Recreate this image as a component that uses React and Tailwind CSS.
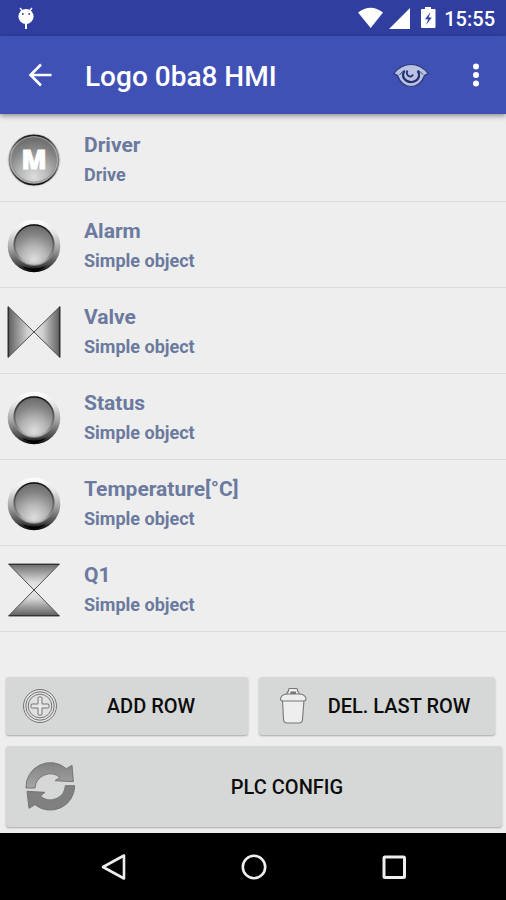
import { useState } from "react";

const initialRows = [
  { name: "Driver", type: "Drive", icon: "motor" },
  { name: "Alarm", type: "Simple object", icon: "lamp" },
  { name: "Valve", type: "Simple object", icon: "valveH" },
  { name: "Status", type: "Simple object", icon: "lamp" },
  { name: "Temperature[°C]", type: "Simple object", icon: "lamp" },
  { name: "Q1", type: "Simple object", icon: "valveV" }
];

// Gradients shared by all the row icons
function IconDefs() {
  return (
    <svg className="absolute h-0 w-0" aria-hidden="true">
      <defs>
        <radialGradient id="face" cx="0.5" cy="0.88" r="0.85">
          <stop offset="0" stopColor="#dedede" />
          <stop offset="0.4" stopColor="#b4b4b4" />
          <stop offset="0.75" stopColor="#848484" />
          <stop offset="1" stopColor="#6c6c6c" />
        </radialGradient>
        <linearGradient id="bezel" x1="0" y1="0" x2="0" y2="1">
          <stop offset="0" stopColor="#ffffff" />
          <stop offset="0.25" stopColor="#e4e4e4" />
          <stop offset="0.55" stopColor="#a4a4a4" />
          <stop offset="0.85" stopColor="#4a4a4a" />
          <stop offset="1" stopColor="#000000" />
        </linearGradient>
        <linearGradient id="innerRim" x1="0" y1="0" x2="0" y2="1">
          <stop offset="0" stopColor="#101010" />
          <stop offset="0.4" stopColor="#555555" />
          <stop offset="0.8" stopColor="#858585" />
          <stop offset="1" stopColor="#c8c8c8" />
        </linearGradient>
        <linearGradient id="motorRim" x1="0" y1="0" x2="0" y2="1">
          <stop offset="0" stopColor="#1c1c1c" />
          <stop offset="0.3" stopColor="#8a8a8a" />
          <stop offset="0.65" stopColor="#808080" />
          <stop offset="1" stopColor="#101010" />
        </linearGradient>
        <linearGradient id="valveX" x1="0" y1="0" x2="1" y2="0">
          <stop offset="0" stopColor="#5c5c5c" />
          <stop offset="0.38" stopColor="#d2d2d2" />
          <stop offset="0.5" stopColor="#dedede" />
          <stop offset="0.66" stopColor="#d2d2d2" />
          <stop offset="1" stopColor="#5c5c5c" />
        </linearGradient>
        <linearGradient id="valveY" x1="0" y1="0" x2="0" y2="1">
          <stop offset="0" stopColor="#6a6a6a" />
          <stop offset="0.36" stopColor="#e0e0e0" />
          <stop offset="0.5" stopColor="#e6e6e6" />
          <stop offset="0.66" stopColor="#d8d8d8" />
          <stop offset="1" stopColor="#5c5c5c" />
        </linearGradient>
        <linearGradient id="arrowTop" x1="0" y1="0" x2="0" y2="1">
          <stop offset="0" stopColor="#828282" />
          <stop offset="1" stopColor="#a6a6a6" />
        </linearGradient>
      </defs>
    </svg>
  );
}

function RowIcon({ kind }) {
  if (kind === "motor") {
    return (
      <svg viewBox="0 0 54 54" className="h-[54px] w-[54px] shrink-0" aria-hidden="true">
        <circle cx="27" cy="27" r="26.500" fill="#c8c8c8" opacity="0.6" />
        <circle cx="27" cy="27" r="24.600" fill="#b4b4b4" stroke="url(#motorRim)" strokeWidth="1.600" />
        <circle cx="27" cy="26.500" r="22.600" fill="url(#face)" stroke="#8a8a8a" strokeWidth="0.800" />
        <text x="27" y="35.500" textAnchor="middle" fontSize="26" fill="#ffffff" stroke="#ffffff" strokeWidth="0.800" className="font-['Open_Sans',sans-serif] font-extrabold">
          M
        </text>
      </svg>
    );
  }
  if (kind === "lamp") {
    return (
      <svg viewBox="0 0 54 54" className="h-[54px] w-[54px] shrink-0" aria-hidden="true">
        <circle cx="27" cy="27" r="26.300" fill="url(#bezel)" />
        <path d="M15 47Q27 52 39 47Q27 56.500 15 47Z" fill="#000000" />
        <circle cx="27" cy="26" r="20.800" fill="#8c8c8c" />
        <circle cx="27" cy="25.500" r="19.500" fill="url(#face)" stroke="url(#innerRim)" strokeWidth="1.600" />
      </svg>
    );
  }
  if (kind === "valveH") {
    return (
      <svg viewBox="0 0 54 54" className="h-[54px] w-[54px] shrink-0" aria-hidden="true">
        <path d="M1 1.500L53 52.500V1.500L1 52.500Z" fill="url(#valveX)" stroke="#4d4d4d" strokeWidth="1" />
        <path d="M1.500 2V52M52.500 2V52" stroke="#2e2e2e" strokeWidth="1.200" />
      </svg>
    );
  }
  return (
    <svg viewBox="0 0 54 54" className="h-[54px] w-[54px] shrink-0" aria-hidden="true">
      <path d="M1.500 1L52.500 53H1.500L52.500 1Z" fill="url(#valveY)" stroke="#4d4d4d" strokeWidth="1" />
      <path d="M2 1.500H52M2 52.500H52" stroke="#333333" strokeWidth="1.200" />
    </svg>
  );
}

function StatusBar() {
  return (
    <div className="flex h-9 items-center bg-[#303f9f] pl-[17px] pr-[11px] text-white">
      <svg viewBox="0 0 18 24" className="h-6 w-[18px]" fill="#ffffff" aria-hidden="true">
        <path d="M3 2L5.500 5M15 2L12.500 5" stroke="#ffffff" strokeWidth="1.400" />
        <circle cx="9" cy="10.500" r="7.600" />
        <path d="M9 17V23" stroke="#ffffff" strokeWidth="2" />
        <circle cx="5.800" cy="8" r="0.900" fill="#303f9f" />
        <circle cx="12.200" cy="8" r="0.900" fill="#303f9f" />
      </svg>
      <svg viewBox="0 0 78 24" className="ml-auto h-6 w-[78px]" fill="#ffffff" aria-hidden="true">
        <path d="M0 6.500Q12.500 -3 25 6.500L12.700 22Z" />
        <path d="M31 23L52 2V23Z" />
        <path d="M67 1H73V3H76.500Q77.500 3 77.500 4V21Q77.500 22 76.500 22H64Q63 22 63 21V4Q63 3 64 3H67Z" />
        <path d="M72.500 6L67 13.300H70.200L68 19L73.800 11.500H70.600Z" fill="#303f9f" />
      </svg>
      <time className="ml-2 pt-0.5 text-[20px] leading-6 font-medium">15:55</time>
    </div>
  );
}

function Toolbar() {
  return (
    <header className="relative flex h-[78px] items-center bg-[#3f51b5] pl-7 pr-5 text-white shadow-[0_2px_5px_rgba(0,0,0,0.4)]">
      <button type="button" aria-label="Back">
        <svg viewBox="0 0 24 24" className="h-6 w-6" fill="none" stroke="#ffffff" strokeWidth="2.600" aria-hidden="true">
          <path d="M23.500 12H3M13 1.500L2.500 12L13 22.500" />
        </svg>
      </button>
      <h1 className="ml-[33px] pt-1 text-[28px] leading-9 font-medium">Logo 0ba8 HMI</h1>
      <button type="button" aria-label="View" className="ml-auto">
        <svg viewBox="0 0 36 26" className="h-[26px] w-9" fill="none" aria-hidden="true">
          <path
            d="M0.800 11.500Q8 2.500 18 2.500Q28 2.500 35.200 11.500L31.500 13.500Q27.500 24.500 18 24.500Q8.500 24.500 4.500 13.500Z"
            fill="#b9c1e4"
            stroke="#2b3773"
            strokeWidth="1.200"
          />
          <path d="M6.500 13Q9 9.500 11.500 8.500Q9 14 11.500 17.500Q14 20.500 18.500 20.500Q24 20 26 16Q27.500 12 25 8.500Q28 10 30 12.500" stroke="#303d82" strokeWidth="1" />
          <path d="M11.500 9Q8.500 13.500 11.500 17Q14.500 20.500 19 20Q25 19 26 14Q26.500 11 24.500 9" stroke="#24306e" strokeWidth="2.200" />
          <path d="M14.500 8.500Q12.800 12 15.500 14Q19 15.500 20 12.500" stroke="#24306e" strokeWidth="1.800" />
        </svg>
      </button>
      <button type="button" aria-label="More options" className="ml-[37px]">
        <svg viewBox="0 0 20 24" className="h-6 w-5" fill="#ffffff" aria-hidden="true">
          <circle cx="10" cy="3.500" r="3" />
          <circle cx="10" cy="12" r="3" />
          <circle cx="10" cy="20.500" r="3" />
        </svg>
      </button>
    </header>
  );
}

const buttonClass =
  "flex items-center rounded-[3px] bg-[#d6d8d7] pr-1 text-[20px] leading-6 font-medium text-[#0c0c0c] shadow-[0_1px_2px_rgba(0,0,0,0.3)]";

export default function App() {
  const [rows, setRows] = useState(initialRows);

  const addRow = () =>
    setRows([...rows, { name: `Q${rows.length - 4}`, type: "Simple object", icon: "lamp" }]);

  return (
    <div className="flex min-h-screen flex-col bg-[#eeeeee] font-[Roboto,sans-serif]">
      <IconDefs />
      <StatusBar />
      <Toolbar />

      <main className="flex flex-1 flex-col pt-0.5">
        <ul>
          {rows.map((row, i) => (
            <li key={i} className="flex border-b border-[#dcdcdc] pt-3.5 pr-4 pb-[11px] pl-[7px]">
              <div className="pt-[3px]">
                <RowIcon kind={row.icon} />
              </div>
              <div className="ml-[23px] text-[#6b7a9e]">
                <h2 className="text-[21px] leading-[30px] font-bold">{row.name}</h2>
                <p className="text-[18px] leading-[30px] font-bold">{row.type}</p>
              </div>
            </li>
          ))}
        </ul>

        <div className="mt-auto pt-4 pr-1 pb-1.5 pl-1.5">
          <div className="grid grid-cols-[242fr_236fr] gap-[11px] pr-[7px]">
            <button type="button" onClick={addRow} className={`${buttonClass} h-[58px] pl-4`}>
              <svg viewBox="0 0 36 36" className="h-9 w-9 shrink-0" fill="none" stroke="#777777" strokeWidth="1" aria-hidden="true">
                <circle cx="18" cy="18" r="16.500" fill="#dfe0df" />
                <circle cx="18" cy="18" r="14.200" />
                <circle cx="18" cy="18" r="11.800" />
                <path
                  d="M16 9.500Q18 8 20 9.500V16H26.500Q28 18 26.500 20H20V26.500Q18 28 16 26.500V20H9.500Q8 18 9.500 16H16Z"
                  fill="#e6e6e6"
                />
              </svg>
              <span className="flex-1 text-center">ADD ROW</span>
            </button>
            <button type="button" onClick={() => setRows(rows.slice(0, -1))} className={`${buttonClass} h-[58px] pl-5`}>
              <svg viewBox="0 0 28 38" className="h-[38px] w-7 shrink-0" fill="#eeeeee" stroke="#777777" strokeWidth="1.100" aria-hidden="true">
                <path d="M3.500 13L4.500 32.500Q4.800 36 8 36H20Q23.200 36 23.500 32.500L25 13Z" />
                <path d="M8 8V6Q8.500 5 9.500 4V2.500Q9.500 1.500 10.500 1.500H17.500Q18.500 1.500 18.500 2.500V4Q20 5 20 6V8Z" />
                <path d="M12 5H16.500V7.500H12Z" fill="#777777" />
                <path d="M1.500 11.500Q2.500 7 9 7H19.500Q26 7 27 11.500Q27 14 25 14H3.500Q1.500 14 1.500 11.500Z" />
              </svg>
              <span className="flex-1 text-center">DEL. LAST ROW</span>
            </button>
          </div>
          <button type="button" className={`${buttonClass} mt-[11px] h-[81px] w-full pl-[19px]`}>
            <svg viewBox="0 0 153 147" className="h-[49px] w-[51px] shrink-0" stroke="#757575" strokeWidth="3" aria-hidden="true">
              <path d="M3 78A73 73 0 0 1 124 20L141 10L145 59L90 56L105 46A46 46 0 0 0 30 78Z" fill="url(#arrowTop)" />
              <path d="M121 71H149A73 73 0 0 1 30 128L12 139L6 88L60 91L46 102A45 45 0 0 0 121 71Z" fill="#808080" />
            </svg>
            <span className="flex-1 text-center">PLC CONFIG</span>
          </button>
        </div>
      </main>

      <nav className="flex h-[67px] items-center justify-center gap-[112px] bg-black pl-0.5">
        <button type="button" aria-label="Back">
          <svg viewBox="0 0 28 28" className="h-7 w-7" fill="none" stroke="#eeeeee" strokeWidth="2.600" strokeLinejoin="round" aria-hidden="true">
            <path d="M24 2.500V25.500L3 14Z" />
          </svg>
        </button>
        <button type="button" aria-label="Home">
          <svg viewBox="0 0 28 28" className="h-7 w-7" fill="none" stroke="#eeeeee" strokeWidth="2.600" aria-hidden="true">
            <circle cx="14" cy="14" r="11.200" />
          </svg>
        </button>
        <button type="button" aria-label="Recent apps">
          <svg viewBox="0 0 28 28" className="h-7 w-7" fill="none" stroke="#eeeeee" strokeWidth="3" aria-hidden="true">
            <rect x="4" y="4" width="20.500" height="20.500" rx="1" />
          </svg>
        </button>
      </nav>
    </div>
  );
}
